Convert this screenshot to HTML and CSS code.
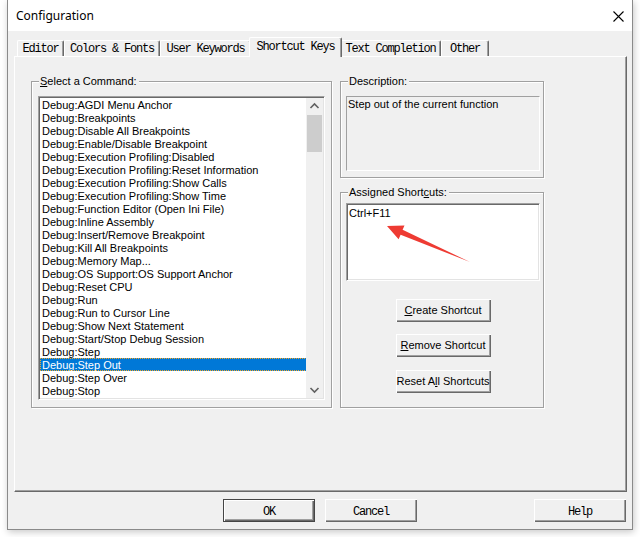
FILE: index.html
```html
<!DOCTYPE html>
<html>
<head>
<meta charset="utf-8">
<title>Configuration</title>
<link rel="stylesheet" href="styles.css">
</head>
<body>
<div class="window">
  <div class="titlebar">
    <span class="title">Configuration</span>
    <svg class="close" width="11" height="11" viewBox="0 0 11 11"><path d="M0.5 0.5 L10.5 10.5 M10.5 0.5 L0.5 10.5" stroke="#000" stroke-width="1.1" fill="none"/></svg>
  </div>
  <div class="body">
    <div class="tabs">
      <div class="tab t-editor">Editor</div>
      <div class="tab t-colors">Colors &amp; Fonts</div>
      <div class="tab t-user">User Keywords</div>
      <div class="tab tab-active t-short">Shortcut Keys</div>
      <div class="tab t-text">Text Completion</div>
      <div class="tab t-other">Other</div>
    </div>
    <div class="panel">
      <div class="group cmd-group">
        <span class="group-label"><u>S</u>elect a Command:</span>
        <div class="listbox">
          <div class="items">
            <div class="item">Debug:AGDI Menu Anchor</div>
            <div class="item">Debug:Breakpoints</div>
            <div class="item">Debug:Disable All Breakpoints</div>
            <div class="item">Debug:Enable/Disable Breakpoint</div>
            <div class="item">Debug:Execution Profiling:Disabled</div>
            <div class="item">Debug:Execution Profiling:Reset Information</div>
            <div class="item">Debug:Execution Profiling:Show Calls</div>
            <div class="item">Debug:Execution Profiling:Show Time</div>
            <div class="item">Debug:Function Editor (Open Ini File)</div>
            <div class="item">Debug:Inline Assembly</div>
            <div class="item">Debug:Insert/Remove Breakpoint</div>
            <div class="item">Debug:Kill All Breakpoints</div>
            <div class="item">Debug:Memory Map...</div>
            <div class="item">Debug:OS Support:OS Support Anchor</div>
            <div class="item">Debug:Reset CPU</div>
            <div class="item">Debug:Run</div>
            <div class="item">Debug:Run to Cursor Line</div>
            <div class="item">Debug:Show Next Statement</div>
            <div class="item">Debug:Start/Stop Debug Session</div>
            <div class="item">Debug:Step</div>
            <div class="item item-selected">Debug:Step Out</div>
            <div class="item">Debug:Step Over</div>
            <div class="item">Debug:Stop</div>
          </div>
          <div class="vscroll">
            <div class="sb-btn"><svg width="17" height="17" viewBox="0 0 17 17"><path d="M4.5 10 L8.5 6 L12.5 10" stroke="#606060" stroke-width="1.6" fill="none"/></svg></div>
            <div class="sb-thumb"></div>
            <div class="sb-track"></div>
            <div class="sb-btn"><svg width="17" height="17" viewBox="0 0 17 17"><path d="M4.5 7 L8.5 11 L12.5 7" stroke="#606060" stroke-width="1.6" fill="none"/></svg></div>
          </div>
        </div>
      </div>
      <div class="right-col">
        <div class="group desc-group">
          <span class="group-label">Description:</span>
          <div class="desc-box">Step out of the current function</div>
        </div>
        <div class="group keys-group">
          <span class="group-label">Assigned Short<u>c</u>uts:</span>
          <div class="keylist">Ctrl+F11</div>
          <div class="btn-col">
            <button class="btn btn-create"><u>C</u>reate Shortcut</button>
            <button class="btn btn-remove"><u>R</u>emove Shortcut</button>
            <button class="btn btn-reset">Reset A<u>l</u>l Shortcuts</button>
          </div>
        </div>
      </div>
    </div>
    <div class="dlg-buttons">
      <button class="btn dbtn dbtn-default">OK</button>
      <button class="btn dbtn">Cancel</button>
      <button class="btn dbtn dbtn-help">Help</button>
    </div>
  </div>
</div>
<svg class="annot" width="640" height="537" viewBox="0 0 640 537">
  <polygon points="387,226 404.5,225.5 402.6,229.8 470,262 400.6,234.8 398.6,239.2" fill="#ee3b33"/>
</svg>
</body>
</html>
```
FILE: styles.css
```css
* { box-sizing: border-box; }
html, body { margin: 0; padding: 0; }
body {
  width: 640px;
  height: 537px;
  overflow: hidden;
  position: relative;
  background: #ffffff;
  font-family: "Liberation Sans", Arial, sans-serif;
  font-size: 11px;
  color: #000;
}
.window {
  margin-left: 7px;
  width: 626px;
  height: 530px;
  border: 1px solid #8a8a8a;
  border-top: none;
  background: #f0f0f0;
  display: flex;
  flex-direction: column;
  box-shadow: 1px 2px 7px rgba(0,0,0,0.22);
}
.titlebar {
  height: 31px;
  flex: none;
  background: #ffffff;
  display: flex;
  align-items: center;
  padding-left: 8px;
  padding-top: 1px;
}
.title {
  font-family: "Noto Sans", sans-serif;
  font-size: 12px;
  line-height: 16px;
}
.close { margin-left: auto; margin-right: 8px; display: block; }
.body { flex: 1; padding-top: 6px; display: flex; flex-direction: column; }

.tabs {
  display: flex;
  align-items: flex-end;
  height: 19px;
  padding-left: 9px;
  position: relative;
  z-index: 2;
}
.tab {
  height: 16px;
  border-top: 1px solid #ffffff;
  border-left: 1px solid #ffffff;
  border-right: 1px solid #696969;
  box-shadow: inset -1px 0 0 #a0a0a0;
  border-radius: 2px 2px 0 0;
  font-family: "Liberation Mono", monospace;
  font-size: 12px;
  letter-spacing: -1.2px;
  line-height: 16px;
  text-align: center;
  white-space: nowrap;
  background: #f0f0f0;
}
.t-editor { width: 47px; }
.t-colors { width: 96px; }
.t-user { width: 91px; }
.t-short { width: 93px; }
.t-text { width: 101px; }
.t-other { width: 48px; }
.tab-active {
  height: 20px;
  margin: 0 -2px -1px -2px;
  line-height: 18px;
  position: relative;
  z-index: 3;
}
.t-text { position: relative; z-index: 1; }

.panel {
  margin-left: 6px;
  width: 613px;
  height: 436px;
  flex: none;
  border-top: 1px solid #ffffff;
  border-left: 1px solid #ffffff;
  border-right: 1px solid #696969;
  border-bottom: 1px solid #696969;
  box-shadow: inset -1px -1px 0 #a0a0a0;
  padding: 24px 0 0 16px;
  display: flex;
  align-items: flex-start;
}
.group {
  position: relative;
  border: 1px solid #a0a0a0;
  box-shadow: inset 1px 1px 0 #ffffff, 1px 1px 0 #ffffff;
}
.group-label {
  position: absolute;
  top: -7px;
  left: 7px;
  padding: 0 2px 0 1px;
  background: #f0f0f0;
  line-height: 13px;
  white-space: nowrap;
}
.cmd-group {
  width: 301px;
  height: 327px;
  margin-right: 8px;
  padding: 14px 0 0 6px;
}
.listbox {
  width: 287px;
  height: 304px;
  border-top: 1px solid #a0a0a0;
  border-left: 1px solid #a0a0a0;
  border-right: 1px solid #ffffff;
  border-bottom: 1px solid #ffffff;
  box-shadow: inset 1px 1px 0 #696969, inset -1px -1px 0 #e3e3e3;
  padding: 1px;
  background: #ffffff;
  display: flex;
}
.items { flex: 1; background: #ffffff; }
.item {
  height: 13px;
  line-height: 14px;
  padding-left: 2px;
  white-space: nowrap;
  overflow: hidden;
}
.item-selected {
  background: #0078d7;
  color: #ffffff;
  outline: 1px dotted #f5a623;
  outline-offset: -1px;
  margin-right: -1px;
}
.vscroll {
  width: 17px;
  background: #f0f0f0;
  display: flex;
  flex-direction: column;
}
.sb-btn { height: 17px; flex: none; }
.sb-btn svg { display: block; }
.sb-thumb { height: 37px; flex: none; background: #cdcdcd; margin: 0 1px 0 1px; }
.sb-track { flex: 1; }

.right-col { width: 204px; display: flex; flex-direction: column; }
.desc-group { height: 97px; padding: 14px 0 0 5px; }
.desc-box {
  width: 194px;
  height: 75px;
  border-top: 1px solid #a0a0a0;
  border-left: 1px solid #a0a0a0;
  border-right: 1px solid #ffffff;
  border-bottom: 1px solid #ffffff;
  padding: 1px 0 0 1px;
  line-height: 13px;
}
.keys-group {
  margin-top: 14px;
  height: 216px;
  padding: 10px 0 0 5px;
}
.keylist {
  width: 194px;
  height: 78px;
  border-top: 1px solid #a0a0a0;
  border-left: 1px solid #a0a0a0;
  border-right: 1px solid #ffffff;
  border-bottom: 1px solid #ffffff;
  box-shadow: inset 1px 1px 0 #696969, inset -1px -1px 0 #e3e3e3;
  background: #ffffff;
  padding: 2px 0 0 2px;
  line-height: 14px;
}
.btn-col {
  display: flex;
  flex-direction: column;
  align-items: center;
  padding-right: 3px;
  margin-top: 18px;
}
.btn {
  font-family: "Liberation Sans", Arial, sans-serif;
  font-size: 11px;
  color: #000;
  background: #f0f0f0;
  border: none;
  padding: 0;
  margin: 0;
  height: 23px;
  box-shadow: inset 1px 1px 0 #ffffff, inset -1px -1px 0 #696969, inset -2px -2px 0 #a0a0a0;
  text-align: center;
  line-height: 21px;
}
.btn-col .btn { width: 95px; }
.btn-remove { margin-top: 12px; }
.btn-reset { margin-top: 13px; }

.dlg-buttons {
  display: flex;
  margin-top: 7px;
  padding-left: 215px;
  padding-right: 6px;
}
.dbtn {
  width: 92px;
  font-family: "Liberation Mono", monospace;
  font-size: 12px;
  letter-spacing: -1.2px;
  padding-top: 3px;
  line-height: 18px;
}
.dbtn + .dbtn { margin-left: 10px; }
.dbtn-default {
  border: 1px solid #454545;
  box-shadow: inset 1px 1px 0 #ffffff, inset -1px -1px 0 #696969, inset -2px -2px 0 #a0a0a0;
}
.dbtn-help { margin-left: auto !important; }

.annot {
  position: absolute;
  left: 0;
  top: 0;
  pointer-events: none;
}
```
